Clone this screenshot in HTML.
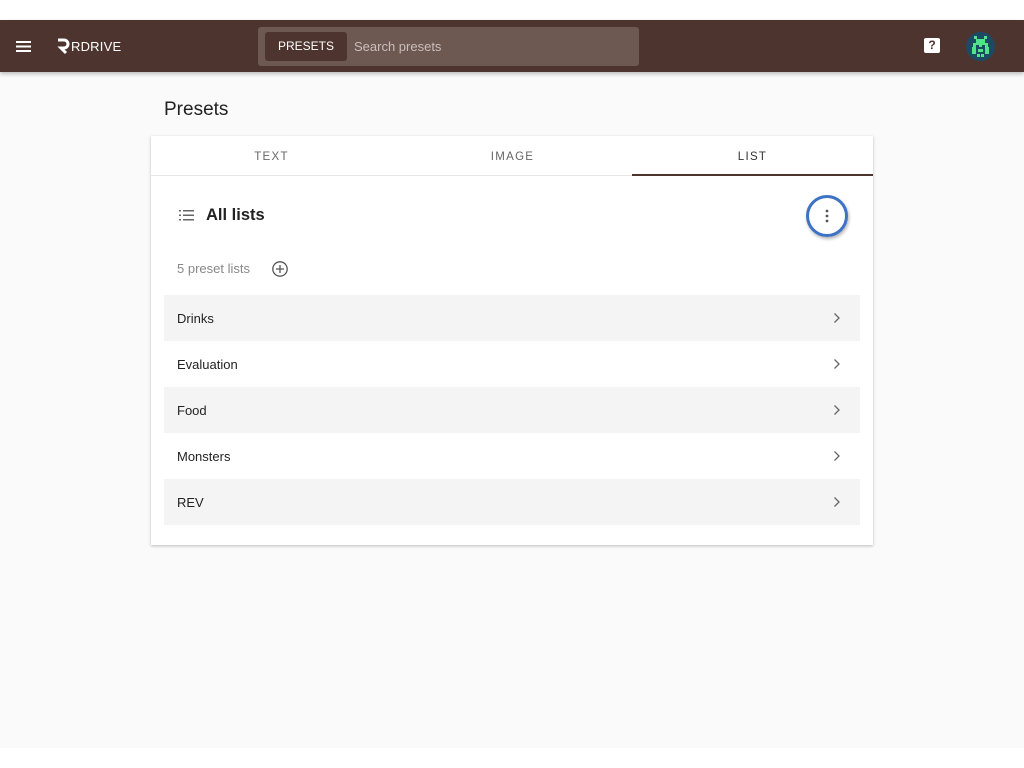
<!DOCTYPE html>
<html><head><style>
*{box-sizing:border-box;margin:0;padding:0}
body{width:1024px;height:768px;background:#fff;font-family:"Liberation Sans",sans-serif;position:relative;overflow:hidden}
.page{position:absolute;top:20px;left:0;width:1024px;height:728px;background:#fafafa}
.hdr{position:absolute;top:20px;left:0;width:1024px;height:52px;background:#4e342e;box-shadow:0 2px 4px rgba(0,0,0,.25)}
.search{position:absolute;left:258px;top:7px;width:381px;height:39px;background:#6d5852;border-radius:3px}
.pbtn{position:absolute;left:7px;top:5px;width:82px;height:29px;background:#4e342e;border-radius:3px;color:#fff;font-size:12px;text-align:center;line-height:29px}
.ph{position:absolute;left:96px;top:0;line-height:39px;color:#cbbfbb;font-size:13px}
.card{position:absolute;left:151px;top:136px;width:722px;height:409px;background:#fff;box-shadow:0 1px 3px rgba(0,0,0,.25)}
.tabs{height:40px;border-bottom:1px solid #e6e6e6;position:relative}
.tab{position:absolute;top:1px;width:241px;text-align:center;line-height:40px;font-size:11.5px;letter-spacing:1.3px;color:#666}
.row{position:absolute;left:13px;width:696px;height:46px;font-size:13px;color:#222;line-height:47px;padding-left:13px}
.row.g{background:#f4f4f4}
.row svg{position:absolute;right:19px;top:17px}
</style></head><body>
<div class="page"></div>
<div class="hdr">
<svg style="position:absolute;left:16px;top:21px" width="15" height="11"><rect y="0" width="15" height="2" fill="#fff"/><rect y="4.5" width="15" height="2" fill="#fff"/><rect y="9" width="15" height="2" fill="#fff"/></svg>
<svg style="position:absolute;left:56px;top:17px" width="14" height="18" viewBox="0 0 14 18"><path d="M2 3 H8 A4 4 0 0 1 8 11 H5 L10 16" stroke="#fff" stroke-width="3" fill="none"/></svg>
<div style="position:absolute;left:71px;top:19px;color:#fff;font-size:13px;letter-spacing:0.2px">RDRIVE</div>
<div class="search"><div class="pbtn">PRESETS</div><div class="ph">Search presets</div></div>
<div style="position:absolute;left:924px;top:18px;width:16px;height:15px;background:#fff;border-radius:2px;font-size:12px;font-weight:bold;text-align:center;line-height:15px;color:#4e342e">?</div>
<div style="position:absolute;left:966px;top:12px;width:29px;height:29px;border-radius:50%;background:#1d4a63;overflow:hidden">
<svg width="29" height="29" viewBox="0 0 29 29"><g fill="#4fe38a"><rect x="8" y="4" width="3" height="3"/><rect x="18" y="4" width="3" height="3"/><rect x="10" y="7" width="9" height="4"/><rect x="7" y="11" width="15" height="4"/><rect x="10" y="13" width="3" height="2" fill="#1d4a63"/><rect x="16" y="13" width="3" height="2" fill="#1d4a63"/><rect x="6" y="15" width="4" height="7"/><rect x="19" y="15" width="4" height="7"/><rect x="12" y="17" width="5" height="3"/><rect x="11" y="22" width="3" height="3"/><rect x="15" y="22" width="3" height="3"/></g></svg></div>
</div>
<div style="position:absolute;left:164px;top:99px;font-size:19px;color:#222">Presets</div>
<div class="card">
<div class="tabs">
<div class="tab" style="left:0">TEXT</div>
<div class="tab" style="left:241px">IMAGE</div>
<div class="tab" style="left:481px;color:#333">LIST</div>
<div style="position:absolute;left:481px;width:241px;bottom:-1px;height:2px;background:#4e342e"></div>
</div>
<svg style="position:absolute;left:28px;top:74px" width="15" height="11"><g fill="#666"><rect y="0" width="2" height="1.5"/><rect x="4" y="0" width="11" height="1.5"/><rect y="4.5" width="2" height="1.5"/><rect x="4" y="4.5" width="11" height="1.5"/><rect y="9" width="2" height="1.5"/><rect x="4" y="9" width="11" height="1.5"/></g></svg>
<div style="position:absolute;left:55px;top:70px;font-size:16.5px;color:#222;font-weight:bold">All lists</div>
<div style="position:absolute;left:655px;top:59px;width:42px;height:42px;border:3px solid #3d72c4;border-radius:50%;box-shadow:1px 2px 3px rgba(0,0,0,.3)"></div>
<svg style="position:absolute;left:674px;top:73px" width="4" height="14"><circle cx="2" cy="2" r="1.4" fill="#555"/><circle cx="2" cy="7" r="1.4" fill="#555"/><circle cx="2" cy="12" r="1.4" fill="#555"/></svg>
<div style="position:absolute;left:26px;top:125px;font-size:13px;color:#888">5 preset lists</div>
<svg style="position:absolute;left:120px;top:124px" width="18" height="18"><circle cx="9" cy="9" r="7.2" stroke="#555" stroke-width="1.3" fill="none"/><path d="M9 5v8M5 9h8" stroke="#555" stroke-width="1.3"/></svg>
<div class="row g" style="top:159px">Drinks<svg width="8" height="12"><path d="M1.5 1.5l4.5 4.5-4.5 4.5" stroke="#666" stroke-width="1.3" fill="none"/></svg></div>
<div class="row" style="top:205px">Evaluation<svg width="8" height="12"><path d="M1.5 1.5l4.5 4.5-4.5 4.5" stroke="#666" stroke-width="1.3" fill="none"/></svg></div>
<div class="row g" style="top:251px">Food<svg width="8" height="12"><path d="M1.5 1.5l4.5 4.5-4.5 4.5" stroke="#666" stroke-width="1.3" fill="none"/></svg></div>
<div class="row" style="top:297px">Monsters<svg width="8" height="12"><path d="M1.5 1.5l4.5 4.5-4.5 4.5" stroke="#666" stroke-width="1.3" fill="none"/></svg></div>
<div class="row g" style="top:343px">REV<svg width="8" height="12"><path d="M1.5 1.5l4.5 4.5-4.5 4.5" stroke="#666" stroke-width="1.3" fill="none"/></svg></div>
</div>
</body></html>
